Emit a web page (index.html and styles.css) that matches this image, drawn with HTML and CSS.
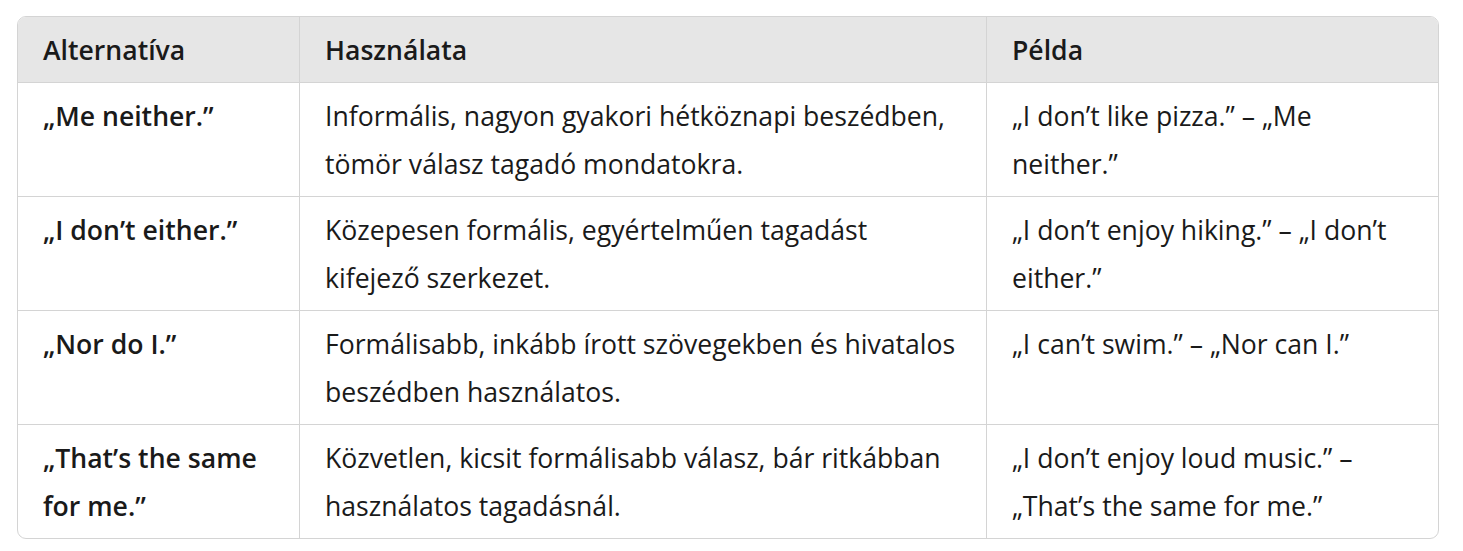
FILE: index.html
```html
<!DOCTYPE html>
<html lang="hu">
<head>
<meta charset="utf-8">
<title>Alternatívák</title>
<link rel="stylesheet" href="styles.css">
</head>
<body>
<div class="wrap">
<table class="grid">
  <thead>
    <tr>
      <th class="c1">Alternatíva</th>
      <th class="c2">Használata</th>
      <th class="c3">Példa</th>
    </tr>
  </thead>
  <tbody>
    <tr>
      <td class="phrase">„Me neither.”</td>
      <td>Informális, nagyon gyakori hétköznapi beszédben, tömör válasz tagadó mondatokra.</td>
      <td>„I don’t like pizza.” – „Me neither.”</td>
    </tr>
    <tr>
      <td class="phrase">„I don’t either.”</td>
      <td>Közepesen formális, egyértelműen tagadást kifejező szerkezet.</td>
      <td>„I don’t enjoy hiking.” – „I don’t either.”</td>
    </tr>
    <tr>
      <td class="phrase">„Nor do I.”</td>
      <td>Formálisabb, inkább írott szövegekben és hivatalos beszédben használatos.</td>
      <td>„I can’t swim.” – „Nor can I.”</td>
    </tr>
    <tr>
      <td class="phrase">„That’s the same for me.”</td>
      <td>Közvetlen, kicsit formálisabb válasz, bár ritkábban használatos tagadásnál.</td>
      <td>„I don’t enjoy loud music.” – „That’s the same for me.”</td>
    </tr>
  </tbody>
</table>
</div>
</body>
</html>
```

FILE: styles.css
```css
html, body {
  margin: 0;
  padding: 0;
  background: #ffffff;
}

.wrap {
  padding: 16px 0 0 17px;
}

.grid {
  width: 1422px;
  table-layout: fixed;
  border-collapse: separate;
  border-spacing: 0;
  border: 1px solid #d4d4d4;
  border-radius: 9px;
  overflow: hidden;
  font-family: "Open Sans", "Noto Sans", sans-serif;
  font-size: 26.6px;
  line-height: 48px;
  color: #1a1a1a;
}

.grid th,
.grid td {
  box-sizing: border-box;
  text-align: left;
  vertical-align: top;
  padding: 9px 24px 8px 25px;
  border-right: 1px solid #d4d4d4;
  border-bottom: 1px solid #d4d4d4;
}

.grid th:last-child,
.grid td:last-child {
  border-right: none;
}

.grid tbody tr:last-child td {
  border-bottom: none;
}

.grid th {
  background: #e6e6e6;
  font-weight: 600;
}

.grid .c1 { width: 282px; }
.grid .c2 { width: 687px; }

.grid .phrase {
  font-weight: 600;
}
```
